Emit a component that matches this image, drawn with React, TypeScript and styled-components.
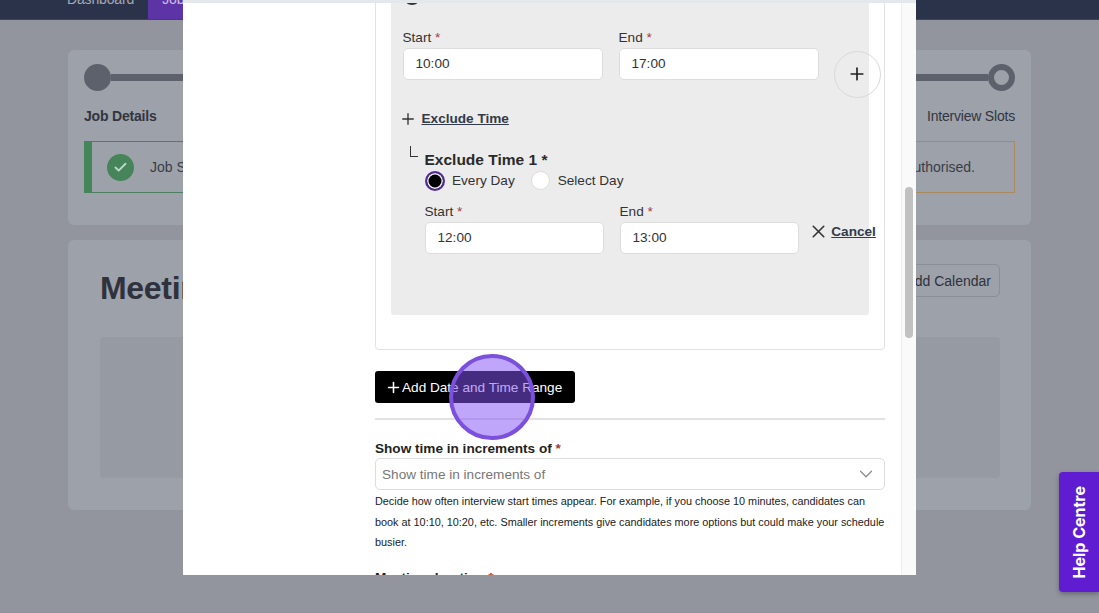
import React from 'react';
import styled, { createGlobalStyle } from 'styled-components';
import { Check, ChevronDown, Plus, X } from 'lucide-react';

const GlobalStyle = createGlobalStyle`
    html, body {
        margin: 0;
        height: 100%;
        overflow: hidden;
    }

    body {
        font-family: "Liberation Sans", Arial, sans-serif;
        font-size: 13.6px;
        color: #222;
    }

    * {
        box-sizing: border-box;
    }
`;

const Page = styled.div`
    position: relative;
    height: 613px;
    overflow: hidden;
    background: #92959e;
`;

// <BACKGROUND PAGE>
const NavBar = styled.nav`
    display: flex;
    height: 41px;
    margin-top: -21px;
    padding-left: 53px;
    background: #2a334a;
    border-bottom: 1px solid #3d4557;
`;

const NavItem = styled.a<{ $active?: boolean }>`
    display: flex;
    align-items: center;
    height: 100%;
    padding: 0 14px;
    font-size: 14px;
    letter-spacing: -0.15px;
    color: ${({ $active }) => ($active ? '#cbbcf0' : '#a5a9b4')};
    background: ${({ $active }) => ($active ? '#5c34a6' : 'transparent')};
`;

const Main = styled.main`
    display: flex;
    flex-direction: column;
    gap: 15px;
    padding: 30px 68px 0;
`;

const Card = styled.section`
    background: #9da1a9;
    border-radius: 6px;
`;

const StepCard = styled(Card)`
    height: 175px;
    padding: 14px 16px;
`;

const Stepper = styled.div`
    display: flex;
    align-items: center;
`;

const StepDot = styled.span<{ $ring?: boolean }>`
    flex: none;
    width: 27px;
    height: 27px;
    border-radius: 50%;
    background: ${({ $ring }) => ($ring ? '#9da1a9' : '#5d616c')};
    border: ${({ $ring }) => ($ring ? '6px solid #5d616c' : 'none')};
`;

const StepLine = styled.span`
    flex: 1;
    height: 7px;
    background: #5d616c;
`;

const StepLabels = styled.div`
    display: flex;
    justify-content: space-between;
    margin-top: 16px;
    font-size: 14px;
    letter-spacing: -0.2px;
    line-height: 18px;
    color: #32353f;
`;

const StepLabel = styled.span<{ $bold?: boolean }>`
    font-weight: ${({ $bold }) => ($bold ? 700 : 400)};
`;

const Alerts = styled.div`
    display: flex;
    gap: 20px;
    margin-top: 16px;
`;

const Alert = styled.div<{ $warning?: boolean }>`
    flex: 1;
    display: flex;
    align-items: center;
    justify-content: ${({ $warning }) => ($warning ? 'flex-end' : 'flex-start')};
    gap: 16px;
    height: 52px;
    padding: ${({ $warning }) => ($warning ? '0 39px 0 0' : '0 0 0 15px')};
    font-size: 14px;
    color: #3a3d47;
    border: 1px solid ${({ $warning }) => ($warning ? '#a98a5e' : '#4f7f62')};
    border-left: ${({ $warning }) => ($warning ? '1px solid #a98a5e' : '8px solid #458559')};
`;

const AlertIcon = styled.span`
    display: flex;
    align-items: center;
    justify-content: center;
    width: 27px;
    height: 27px;
    border-radius: 50%;
    color: #c3d4c8;
    background: #458559;
`;

const MeetingCard = styled(Card)`
    height: 270px;
    padding: 24px 31px 32px 32px;
`;

const MeetingHeader = styled.div`
    display: flex;
    align-items: flex-start;
    justify-content: space-between;
    height: 33px;
`;

const MeetingTitle = styled.h1`
    margin: 6px 0 0;
    font-size: 32px;
    line-height: 36px;
    letter-spacing: -0.3px;
    color: #2f323d;
`;

const OutlineButton = styled.button`
    height: 33px;
    padding: 0 8px;
    font: inherit;
    font-size: 14px;
    color: #2f323d;
    background: transparent;
    border: 1px solid #8a8e98;
    border-radius: 5px;
`;

const MeetingPanel = styled.div`
    height: 141px;
    margin-top: 40px;
    background: #969aa3;
    border-radius: 4px;
`;
// </BACKGROUND PAGE>

// <MODAL>
const Modal = styled.div`
    position: absolute;
    top: 0;
    left: 183px;
    display: flex;
    width: 733px;
    height: 575px;
    background: #fff;
    border-top: 3px solid #e4e7eb;
`;

const ScrollArea = styled.div`
    flex: 1;
    overflow: hidden;
    padding: 0 16px 0 192px;
`;

const RangeBox = styled.div`
    margin-top: -53px;
    padding: 18.5px 15px 34.5px 14.5px;
    border: 1.5px solid #e2e2e2;
    border-radius: 4px;
`;

const GreyPanel = styled.div`
    height: 345px;
    padding: 17px 12px 0;
    background: #ececec;
    border-radius: 3px;
`;

const Radio = styled.span<{ $checked?: boolean }>`
    flex: none;
    display: block;
    width: ${({ $checked }) => ($checked ? '20px' : '19px')};
    height: ${({ $checked }) => ($checked ? '20px' : '19px')};
    border-radius: 50%;
    background: ${({ $checked }) => ($checked ? '#000' : '#fff')};
    border: ${({ $checked }) => ($checked ? '2px solid #54289a' : '1px solid #ddd')};
    box-shadow: ${({ $checked }) => ($checked ? 'inset 0 0 0 1.5px #ececec' : 'none')};
`;

const TopRadio = styled(Radio)`
    width: 18px;
    height: 18px;
    background: #ececec;
    border: 3px solid #333;
`;

const FieldRow = styled.div<{ $gap?: number; $top: number }>`
    display: flex;
    align-items: flex-start;
    gap: ${({ $gap }) => $gap ?? 16}px;
    margin-top: ${({ $top }) => $top}px;
`;

const Field = styled.div<{ $width: number }>`
    flex: none;
    width: ${({ $width }) => $width}px;
`;

const FieldLabel = styled.label`
    display: block;
    margin-bottom: 2px;
    padding-top: 1px;
    line-height: 16px;
    color: #333;
`;

const Required = styled.span`
    color: #a33a3a;
`;

const TimeInput = styled.div`
    display: flex;
    align-items: center;
    height: 32px;
    padding-left: 12px;
    color: #333;
    background: #fff;
    border: 1px solid #ddd;
    border-radius: 5px;
`;

const RoundButton = styled.button`
    flex: none;
    display: flex;
    align-items: center;
    justify-content: center;
    width: 47px;
    height: 47px;
    margin: 22px 0 0 -1px;
    padding: 0;
    color: #222;
    background: transparent;
    border: 1px solid #d9d9d9;
    border-radius: 50%;
`;

const ActionLink = styled.a`
    font-weight: 700;
    color: #333a4a;
    text-decoration: underline;
`;

const ExcludeRow = styled.div`
    display: flex;
    align-items: center;
    gap: 4.75px;
    height: 20px;
    margin: 11px 0 0 -3.75px;
    color: #333;
`;

const ExcludeBlock = styled.div`
    display: flex;
    gap: 7px;
    margin: 17px 0 0 7px;
`;

const CornerMark = styled.span`
    flex: none;
    width: 8px;
    height: 11px;
    border-left: 1.8px solid #333;
    border-bottom: 1.8px solid #333;
`;

const ExcludeBody = styled.div`
    padding-top: 4px;
`;

const ExcludeTitle = styled.h3`
    margin: 0;
    font-size: 15.5px;
    line-height: 20px;
    color: #2a2a2a;
`;

const RadioGroup = styled.div`
    display: flex;
    align-items: center;
    height: 20px;
    margin-top: 1px;
    color: #333;
`;

const RadioText = styled.span`
    margin: 0 16.5px 0 7.5px;
`;

const CancelAction = styled.div`
    flex: none;
    display: flex;
    align-items: center;
    gap: 2px;
    height: 20px;
    margin: 19px 0 0 -6.25px;
    color: #333;
`;

const AddRangeButton = styled.button`
    display: flex;
    align-items: center;
    gap: 0.5px;
    width: 200px;
    height: 32px;
    margin-top: 21px;
    padding: 0 0 0 9.5px;
    font: inherit;
    color: #fff;
    background: #000;
    border: none;
    border-radius: 3px;
`;

const Divider = styled.hr`
    height: 1.5px;
    margin: 15px 0 20.5px;
    background: #e2e2e2;
    border: none;
`;

const BoldLabel = styled.label`
    display: block;
    font-weight: 700;
    line-height: 18px;
    color: #222;
`;

const SelectBox = styled.div`
    display: flex;
    align-items: center;
    justify-content: space-between;
    height: 32px;
    padding: 0 7.5px 0 6px;
    color: #777;
    background: #fff;
    border: 1px solid #ddd;
    border-radius: 5px;
`;

const HelpText = styled.p`
    margin: 1px 0 16px;
    font-size: 10.85px;
    line-height: 20.5px;
    color: #222;
`;

const ScrollTrack = styled.div`
    flex: none;
    width: 15px;
    padding: 184px 3px 0 3px;
    background: #fafafa;
    border-left: 1px solid #eee;
`;

const ScrollThumb = styled.div`
    height: 151px;
    background: #c1c1c1;
    border-radius: 4px;
`;
// </MODAL>

const ClickMarker = styled.div`
    position: absolute;
    top: 354px;
    left: 449px;
    width: 86px;
    height: 86px;
    background: rgba(133, 85, 246, 0.52);
    border: 4px solid #7a50dc;
    border-radius: 50%;
`;

const HelpTab = styled.a`
    position: absolute;
    top: 472px;
    right: 0;
    display: flex;
    align-items: center;
    justify-content: center;
    width: 40px;
    height: 120px;
    font-family: Inter, "Open Sans", sans-serif;
    font-size: 16px;
    font-weight: 700;
    color: #fff;
    background: #5f1cd0;
    border-radius: 4px 0 0 4px;
    box-shadow: 0 2px 5px rgba(0, 0, 0, 0.3);

    & > span {
        writing-mode: vertical-rl;
        transform: rotate(180deg);
    }
`;

type TimeFieldProps = { label: string; value: string; width: number };

const TimeField = ({ label, value, width }: TimeFieldProps) => (
    <Field $width={width}>
        <FieldLabel>
            {label} <Required>*</Required>
        </FieldLabel>
        <TimeInput>{value}</TimeInput>
    </Field>
);

export default function App() {
    return (
        <Page>
            <GlobalStyle />

            <NavBar>
                <NavItem>Dashboard</NavItem>
                <NavItem $active>Jobs</NavItem>
            </NavBar>

            <Main>
                <StepCard>
                    <Stepper>
                        <StepDot />
                        <StepLine />
                        <StepDot $ring />
                    </Stepper>
                    <StepLabels>
                        <StepLabel $bold>Job Details</StepLabel>
                        <StepLabel>Interview Slots</StepLabel>
                    </StepLabels>
                    <Alerts>
                        <Alert>
                            <AlertIcon>
                                <Check size={15} strokeWidth={3} />
                            </AlertIcon>
                            Job Submitted
                        </Alert>
                        <Alert $warning>Calendar not authorised.</Alert>
                    </Alerts>
                </StepCard>

                <MeetingCard>
                    <MeetingHeader>
                        <MeetingTitle>Meetings</MeetingTitle>
                        <OutlineButton>+ Add Calendar</OutlineButton>
                    </MeetingHeader>
                    <MeetingPanel />
                </MeetingCard>
            </Main>

            <Modal>
                <ScrollArea>
                    <RangeBox>
                        <GreyPanel>
                            <TopRadio />
                            <FieldRow $top={24}>
                                <TimeField label="Start" value="10:00" width={200} />
                                <TimeField label="End" value="17:00" width={200} />
                                <RoundButton>
                                    <Plus size={20} strokeWidth={2} />
                                </RoundButton>
                            </FieldRow>

                            <ExcludeRow>
                                <Plus size={18} strokeWidth={1.8} />
                                <ActionLink>Exclude Time</ActionLink>
                            </ExcludeRow>

                            <ExcludeBlock>
                                <CornerMark />
                                <ExcludeBody>
                                    <ExcludeTitle>Exclude Time 1 *</ExcludeTitle>
                                    <RadioGroup>
                                        <Radio $checked />
                                        <RadioText>Every Day</RadioText>
                                        <Radio />
                                        <RadioText>Select Day</RadioText>
                                    </RadioGroup>
                                    <FieldRow $top={12}>
                                        <TimeField label="Start" value="12:00" width={179} />
                                        <TimeField label="End" value="13:00" width={179} />
                                        <CancelAction>
                                            <X size={21} strokeWidth={1.8} />
                                            <ActionLink>Cancel</ActionLink>
                                        </CancelAction>
                                    </FieldRow>
                                </ExcludeBody>
                            </ExcludeBlock>
                        </GreyPanel>
                    </RangeBox>

                    <AddRangeButton>
                        <Plus size={17} strokeWidth={2.2} />
                        Add Date and Time Range
                    </AddRangeButton>

                    <Divider />

                    <BoldLabel>
                        Show time in increments of <Required>*</Required>
                    </BoldLabel>
                    <SelectBox>
                        Show time in increments of
                        <ChevronDown size={22} strokeWidth={1.3} color="#888" />
                    </SelectBox>
                    <HelpText>
                        Decide how often interview start times appear. For example, if you choose 10 minutes,
                        candidates can book at 10:10, 10:20, etc. Smaller increments give candidates more
                        options but could make your schedule busier.
                    </HelpText>

                    <BoldLabel>
                        Meeting duration <Required>*</Required>
                    </BoldLabel>
                </ScrollArea>
                <ScrollTrack>
                    <ScrollThumb />
                </ScrollTrack>
            </Modal>

            <ClickMarker />

            <HelpTab>
                <span>Help Centre</span>
            </HelpTab>
        </Page>
    );
}
